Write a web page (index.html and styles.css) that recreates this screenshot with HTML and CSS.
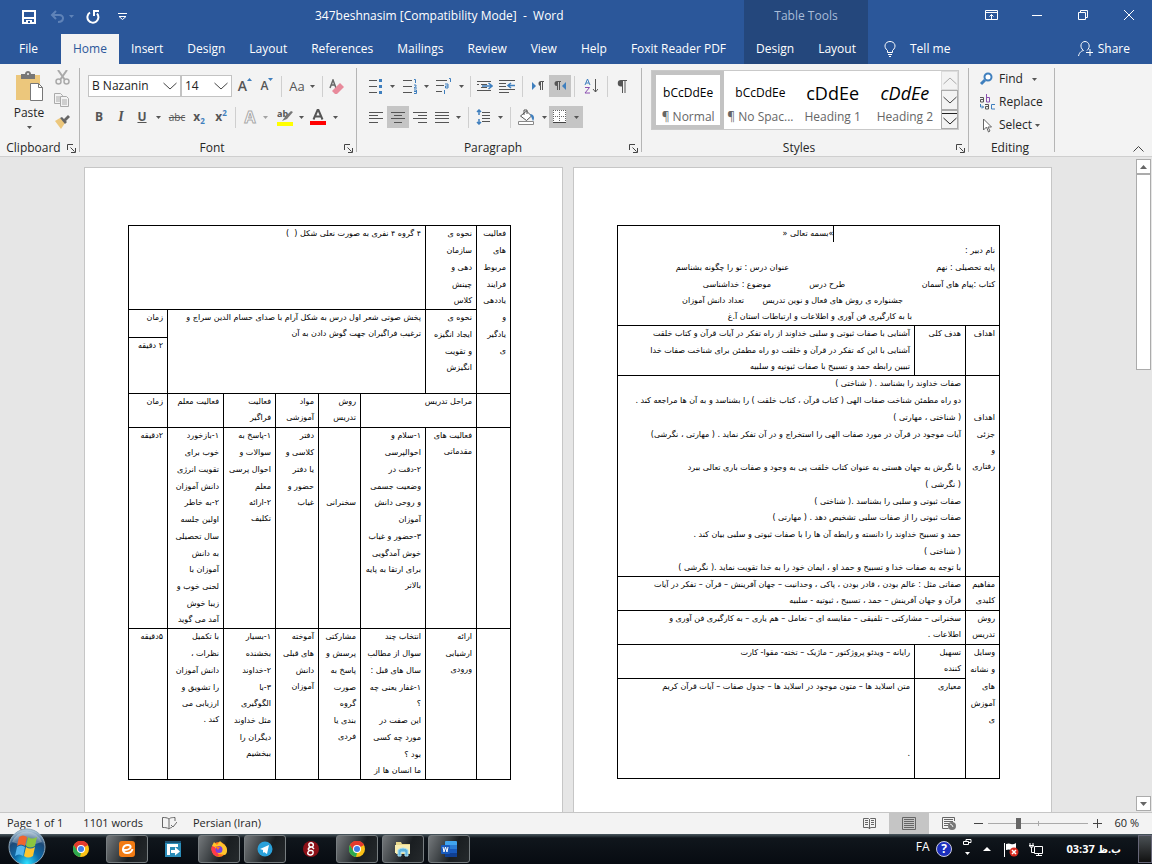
FILE: index.html
```html
<!DOCTYPE html>
<html lang="en">
<head>
<meta charset="utf-8">
<title>347beshnasim [Compatibility Mode] - Word</title>
<link rel="stylesheet" href="styles.css">
</head>
<body>
<svg class="defs" aria-hidden="true">
  <symbol id="caret" viewBox="0 0 5 3"><path d="M0 0h5L2.500 3z" fill="#555"/></symbol>
  <symbol id="launch" viewBox="0 0 9 9"><path d="M.5 6V.5H6M3.500 3.500l4 4M8.500 4v4.500H4" fill="none" stroke="#444"/></symbol>
  <symbol id="chrome" viewBox="0 0 16 16"><circle cx="8" cy="8" r="8" fill="#fbc116"/><path d="M8 8L1 4a8 8 0 0 1 14 0z" fill="#e33b2e"/><path d="M1 4l4 6.500L8 12l-1 4A8 8 0 0 1 1 4z" fill="#2da94f"/><path d="M8 4h7.200A8 8 0 0 0 1 4l3.500 6z" fill="#e33b2e"/><circle cx="8" cy="8" r="4" fill="#fff"/><circle cx="8" cy="8" r="3" fill="#3f7ee8"/></symbol>
  <symbol id="down" viewBox="0 0 14 8"><path d="M.5 1L7 7l6.500-6" fill="none" stroke="#444"/></symbol>
</svg>
<div class="app">
<header class="head">
  <div class="headmain">
    <div class="quick">
      <button aria-label="Save"><svg width="14" height="14"><path d="M1 1h12v12H1z" fill="none" stroke="#fff" stroke-width="2"/><path d="M2 7h10v2H2zM4 10h6v4H4z" fill="#fff"/><path d="M6 11h2v2H6z" fill="#2b579a"/></svg></button>
      <button class="undo" aria-label="Undo"><svg width="24" height="14"><path d="M6 1L2 5l4 4M2 5h7c6 0 5 7-1 7" fill="none" stroke="#5f83b8" stroke-width="2"/><path d="M19 5h5l-2.500 3z" fill="#5f83b8"/></svg></button>
      <button aria-label="Redo"><svg width="14" height="14"><path d="M4 2.500A5.500 5.500 0 1 0 11 3.500" fill="none" stroke="#fff" stroke-width="2"/><path d="M8 0v6M7 1h6" stroke="#fff" stroke-width="2"/></svg></button>
      <button aria-label="Customize Quick Access Toolbar"><svg width="9" height="8"><path d="M0 .5h9M1 3.500h7l-3.500 3z" fill="none" stroke="#fff"/></svg></button>
    </div>
    <h1 class="title">347beshnasim [Compatibility Mode] &nbsp;- &nbsp;Word</h1>
    <nav class="tabs">
      <button class="file">File</button><button class="on">Home</button><button>Insert</button><button>Design</button><button>Layout</button><button>References</button><button>Mailings</button><button>Review</button><button>View</button><button>Help</button><button>Foxit Reader PDF</button>
    </nav>
  </div>
  <div class="tools"><span class="toolstitle">Table Tools</span><nav class="tabs"><button>Design</button><button>Layout</button></nav></div>
  <div class="headend">
    <div class="win">
      <button aria-label="Ribbon display options"><svg width="13" height="10"><path d="M.5.500h12v9H.5zM0 2.500h13M6.500 9V4.500M4.500 6.500l2-2 2 2" fill="none" stroke="#fff"/></svg></button>
      <button aria-label="Minimize"><svg width="10" height="10"><path d="M0 5.500h10" stroke="#fff"/></svg></button>
      <button aria-label="Restore"><svg width="10" height="10"><path d="M.5 2.500h7v7h-7zM2.500 2V.5h7v7H8" fill="none" stroke="#fff"/></svg></button>
      <button aria-label="Close"><svg width="10" height="10"><path d="M0 0l10 10M10 0L0 10" stroke="#fff"/></svg></button>
    </div>
    <div class="help">
      <button><svg width="12" height="16"><path d="M3.500 11.500v-2C-1 6 1 .5 6 .5s7 5.500 2.500 9v2zM4 13.500h4M5 15.500h2" fill="none" stroke="#fff"/></svg>Tell me</button>
      <button class="share"><svg width="16" height="16"><path d="M.5 15c1-4 3-5 5-5.500C1 6 3 .5 7 .5s6 5.500 2 9M12 8v7M8 11.500h7" fill="none" stroke="#fff"/></svg>Share</button>
    </div>
  </div>
</header>

<section class="ribbon">
  <div class="group clip">
    <div class="body">
      <button class="paste"><svg width="29" height="32"><path d="M1 4h24v25H1z" fill="#ecc77c"/><path d="M6 3h4c0-4 6-4 6 0h4v5H6z" fill="#777"/><circle cx="13" cy="3" r="1" fill="#f3f3f3"/><path d="M15.500 12.500h8l4 4v13h-12z" fill="#fff" stroke="#777"/><path d="M23.500 12.500v4h4" fill="none" stroke="#777"/></svg>Paste<svg class="pcaret" width="5" height="3"><use href="#caret"/></svg></button>
      <div class="cliptools">
        <button aria-label="Cut"><svg width="15" height="15"><path d="M3 0l7 10M12 0L5 10" stroke="#aaa" stroke-width="2"/><circle cx="3.500" cy="11.500" r="2.500" fill="none" stroke="#aaa" stroke-width="1.500"/><circle cx="11.500" cy="11.500" r="2.500" fill="none" stroke="#aaa" stroke-width="1.500"/></svg></button>
        <button aria-label="Copy"><svg width="16" height="14"><path d="M.5.500h6l2 2v8h-8zM2 4h4M2 6h4M2 8h4" fill="none" stroke="#aaa"/><path d="M6.500 3.500h6l2 2v8h-8z" fill="#f3f3f3" stroke="#aaa"/><path d="M8 7h5M8 9h5M8 11h5" stroke="#aaa"/></svg></button>
        <button aria-label="Format Painter"><svg width="16" height="14"><path d="M1 6l5-3 5 5-4 6z" fill="#ecc77c"/><path d="M6 3l2-1 5 5-2 2zM10 4l4-4 2 2-4 4z" fill="#666"/></svg></button>
      </div>
    </div>
    <div class="label"><span>Clipboard</span><svg width="9" height="9"><use href="#launch"/></svg></div>
  </div>

  <div class="group font">
    <div class="body rows">
      <div class="row">
        <button class="combo w93">B Nazanin<svg width="14" height="8"><use href="#down"/></svg></button><button class="combo w51">14<svg width="14" height="8"><use href="#down"/></svg></button>
        <button class="w22 glyph big" aria-label="Grow font">A<svg width="5" height="12"><path d="M0 3h5L2.500 0z" fill="#3f7fbe"/></svg></button>
        <button class="w22 glyph" aria-label="Shrink font">A<svg width="5" height="12"><path d="M0 0h5L2.500 3z" fill="#3f7fbe"/></svg></button>
        <i class="sep"></i><button class="w34 case">Aa<svg width="5" height="3"><use href="#caret"/></svg></button><i class="sep"></i>
        <button class="w22" aria-label="Clear formatting"><svg width="16" height="15"><path d="M1 9l3-8 3 8M2 6h4" fill="none" stroke="#666" stroke-width="1.500"/><path d="M4 11l7-7 4 4-7 7H6l-3-3z" fill="#e88a9b"/></svg></button>
      </div>
      <div class="row">
        <button class="w22 bold">B</button><button class="w22 ital">I</button><button class="w34 bold"><u>U</u><svg width="5" height="3"><use href="#caret"/></svg></button><button class="w22 strike">abc</button><button class="w22 bold">x<sub>2</sub></button><button class="w22 bold">x<sup>2</sup></button><i class="sep"></i>
        <button class="w34 outline">A<svg width="5" height="3" opacity=".5"><use href="#caret"/></svg></button>
        <button class="w34 mark" aria-label="Text highlight color"><svg width="17" height="20"><text x="0" y="10" font-size="9" font-weight="700" fill="#555">ab</text><path d="M5 14l3-4 6-6 2 1-6 7z" fill="#777"/><path d="M0 15h16v4H0z" fill="#ff0"/></svg><svg width="5" height="3"><use href="#caret"/></svg></button>
        <button class="w34" aria-label="Font color"><svg width="16" height="16"><path d="M3.500 10.500L8 0l4.500 10.500M5 7.500h6" fill="none" stroke="#555" stroke-width="2"/><path d="M0 12h16v4H0z" fill="red"/></svg><svg width="5" height="3"><use href="#caret"/></svg></button>
      </div>
    </div>
    <div class="label"><span>Font</span><svg width="9" height="9"><use href="#launch"/></svg></div>
  </div>

  <div class="group para">
    <div class="body rows">
      <div class="row">
        <button class="w34" aria-label="Bullets"><svg width="14" height="15"><path d="M0 1.500h8M0 7.500h8M0 13.500h8" stroke="#555"/><path d="M10 0h3v3h-3zM10 6h3v3h-3zM10 12h3v3h-3z" fill="#3f7fbe"/></svg><svg width="5" height="3"><use href="#caret"/></svg></button>
        <button class="w34" aria-label="Numbering"><svg width="14" height="15"><path d="M0 1.500h9M0 7.500h9M0 13.500h9" stroke="#555"/><path d="M11 .5h1.500V4M11 6h2v1.500L11 9h3M11 11h2.500v3.500H11M11 12.500h2" fill="none" stroke="#3f7fbe"/></svg><svg width="5" height="3"><use href="#caret"/></svg></button>
        <button class="w34" aria-label="Multilevel list"><svg width="16" height="16"><path d="M0 2.500h11M0 7.500h8M0 13.500h6" stroke="#555"/><path d="M13 .5h1.500V4M9 6h3v4H9.500V8H12M8.500 12v4" fill="none" stroke="#3f7fbe"/></svg><svg width="5" height="3"><use href="#caret"/></svg></button><i class="sep"></i>
        <button class="w22" aria-label="Decrease indent"><svg width="16" height="12"><path d="M0 1.500h14M4 4.500h6M0 4.500h2M4 7.500h6M0 10.500h14" stroke="#555"/><path d="M5 6h10M11.500 3L15 6l-3.500 3" fill="none" stroke="#3f7fbe" stroke-width="1.500"/></svg></button>
        <button class="w22" aria-label="Increase indent"><svg width="16" height="13"><path d="M0 .5h16M0 3.500h7M0 6.500h7M0 9.500h16M0 12.500h10" stroke="#555"/><path d="M16 5.500H9M12 3L9 5.500 12 8" fill="none" stroke="#3f7fbe" stroke-width="1.500"/></svg></button><i class="sep wide"></i>
        <button class="w22" aria-label="Left-to-right"><svg width="12" height="10"><path d="M0 1l4 4-4 4z" fill="#3f7fbe"/><path d="M9 5a2.500 2.500 0 0 1 0-5h3v1h-1v8h-1V1H9v8H8V5z" fill="#555"/></svg></button>
        <button class="w22 sel" aria-label="Right-to-left"><svg width="12" height="10"><path d="M12 1L8 5l4 4z" fill="#3f7fbe"/><path d="M3 5a2.500 2.500 0 0 1 0-5h4v1H6v8H5V1H4v8H3z" fill="#555"/></svg></button><i class="sep"></i>
        <button class="w26" aria-label="Sort"><svg width="14" height="16"><path d="M1 7l2.500-6L6 7M2 5h3" fill="none" stroke="#3f7fbe"/><path d="M1 9.500h4.500L1 15h5" fill="none" stroke="#8a4fb0"/><path d="M11.500 1v13M9 11l2.500 3 2.500-3" fill="none" stroke="#555"/></svg></button><i class="sep"></i>
        <button class="w22" aria-label="Show formatting marks"><svg width="10" height="13"><path d="M4 6.500a3 3 0 0 1 0-6.500h6v1H8.500v12h-1V1H6v12H5V6.500z" fill="#555"/></svg></button>
      </div>
      <div class="row">
        <button class="w22" aria-label="Align left"><svg width="14" height="11"><path d="M0 .5h14M0 3.500h9M0 6.500h14M0 10.500h9" stroke="#555"/></svg></button>
        <button class="w22 sel" aria-label="Center"><svg width="14" height="11"><path d="M0 .5h14M3 3.500h8M0 6.500h14M3 10.500h8" stroke="#555"/></svg></button>
        <button class="w22" aria-label="Align right"><svg width="14" height="11"><path d="M0 .5h14M5 3.500h9M0 6.500h14M5 10.500h9" stroke="#555"/></svg></button>
        <button class="w34" aria-label="Justify"><svg width="14" height="11"><path d="M0 .5h14M0 3.500h14M0 6.500h14M0 10.500h14" stroke="#555"/></svg><svg width="5" height="3"><use href="#caret"/></svg></button><i class="sep"></i>
        <button class="w34" aria-label="Line spacing"><svg width="15" height="16"><path d="M6 3.500h8M6 6.500h8M6 9.500h8M6 12.500h8" stroke="#555"/><path d="M3 1v5M1 3l2-2 2 2M3 10v5M1 13l2 2 2-2" fill="none" stroke="#3f7fbe" stroke-width="1.500"/></svg><svg width="5" height="3"><use href="#caret"/></svg></button><i class="sep wide"></i>
        <button class="w34" aria-label="Shading"><svg width="17" height="16"><path d="M2.500 7l6-5 5 5-5 4.500zM6 6V1h3v4" fill="#fff" stroke="#555"/><path d="M12 5c4 0 5 4 3 7z" fill="#3f7fbe"/><path d="M.5 12.500h15v3H.5z" fill="#fff" stroke="#888"/></svg><svg width="5" height="3"><use href="#caret"/></svg></button>
        <button class="w34 sel" aria-label="Borders"><svg width="14" height="14"><path d="M0 0h13v13H0z" fill="#fff"/><path d="M.5 0v12M6.500 0v12M12.500 0v12M0 .5h13M0 6.500h13" stroke="#666" stroke-dasharray="1 1"/><path d="M0 12.500h13" stroke="#444"/></svg><svg width="5" height="3"><use href="#caret"/></svg></button>
      </div>
    </div>
    <div class="label"><span>Paragraph</span><svg width="9" height="9"><use href="#launch"/></svg></div>
  </div>

  <div class="group styles">
    <div class="body"><div class="gallery">
      <button class="style cur"><span class="demo">bCcDdEe</span><span>¶ Normal</span></button>
      <button class="style"><span class="demo">bCcDdEe</span><span>¶ No Spac...</span></button>
      <button class="style"><span class="demo h1">cDdEe</span><span>Heading 1</span></button>
      <button class="style"><span class="demo h2">cDdEe</span><span>Heading 2</span></button>
      <div class="scrolls"><button class="dim" aria-label="Previous styles"><svg width="14" height="8"><path d="M.5 7L7 1l6.500 6" fill="none" stroke="#aaa"/></svg></button><button aria-label="Next styles"><svg width="14" height="8"><use href="#down"/></svg></button><button aria-label="More styles"><svg width="16" height="12"><path d="M0 .5h16M1.500 5L8 11l6.500-6" fill="none" stroke="#222"/></svg></button></div>
    </div></div>
    <div class="label"><span>Styles</span><svg width="9" height="9"><use href="#launch"/></svg></div>
  </div>

  <div class="group edit">
    <div class="body edits">
      <button><svg class="ico" width="16" height="14"><circle cx="9" cy="5" r="3.500" fill="#fff" stroke="#3f7fbe" stroke-width="2"/><path d="M6 8l-4 4" stroke="#3f7fbe" stroke-width="3"/></svg>Find<svg class="far" width="5" height="3"><use href="#caret"/></svg></button>
      <button><svg class="ico" width="17" height="20" fill="none" stroke="#555"><path d="M1 5.500h3.500V10H1.500V7.500h3"/><path d="M7.500 2v8h3V5.500h-3" stroke="#8a4fb0"/><path d="M6 12.500h3.500V17H6.500v-2.500h3"/><path d="M16 12.500h-3.500V17H16M1.500 12v3h3M3 13.500l1.500 1.500L3 16.500" stroke="#3f7fbe"/></svg>Replace</button>
      <button><svg class="ico" width="16" height="15"><path d="M4.500 1v11l3-3 2 5 1.500-1-2-4h3.500z" fill="#fff" stroke="#666"/></svg>Select<svg width="5" height="3"><use href="#caret"/></svg></button>
    </div>
    <div class="label"><span>Editing</span></div>
  </div>
  <button class="collapse" aria-label="Collapse ribbon"><svg width="11" height="6"><path d="M.5 5.500l5-5 5 5" fill="none" stroke="#444"/></svg></button>
</section>

<main class="work">
  <div class="canvas">
    <article class="page" dir="rtl" lang="fa">
      <table class="t1">
        <colgroup><col class="k1"><col class="k2"><col></colgroup>
        <tr class="r100"><td colspan="3">
          <p class="mid">»بسمه تعالی «</p><p>نام دبیر :</p>
          <p><span class="s206">پایه تحصیلی : نهم</span>عنوان درس : تو را چگونه بشناسم</p>
          <p><span class="s150">کتاب :پیام های آسمان</span><span class="s74">طرح درس</span>موضوع : خداشناسی</p>
          <p><span class="s92"></span><span class="s159">جشنواره ی روش های فعال و نوین تدریس</span>تعداد دانش آموزان</p>
          <p><span class="s83"></span>با به کارگیری فن آوری و اطلاعات و ارتباطات استان آ.غ</p></td></tr>
        <tr class="r50"><td><p>اهداف</p></td><td><p>هدف کلی</p></td><td><p>آشنایی با صفات ثبوتی و سلبی خداوند از راه تفکر در آیات قرآن و کتاب خلقت</p><p>آشنایی با این که تفکر در قرآن و خلقت دو راه مطمئن برای شناخت صفات خدا</p><p>تبیین رابطه حمد و تسبیح با صفات ثبوتیه و سلبیه</p></td></tr>
        <tr class="r201"><td><p></p><p></p><p>اهداف</p><p>جزئی</p><p>و</p><p>رفتاری</p></td><td colspan="2"><p>صفات خداوند را بشناسد . ( شناختی )</p><p>دو راه مطمئن شناخت صفات الهی ( کتاب قرآن ، کتاب خلقت ) را بشناسد و به آن ها مراجعه کند .</p><p>( شناختی ، مهارتی )</p><p>آیات موجود در قرآن در مورد صفات الهی را استخراج و در آن تفکر نماید . ( مهارتی ، نگرشی)</p><p></p><p>با نگرش به جهان هستی به عنوان کتاب خلقت پی به وجود و صفات باری تعالی ببرد</p><p>( نگرشی )</p><p>صفات ثبوتی و سلبی را بشناسد .( شناختی )</p><p>صفات ثبوتی را از صفات سلبی تشخیص دهد . ( مهارتی )</p><p>حمد و تسبیح خداوند را دانسته و رابطه آن ها را با صفات ثبوتی و سلبی بیان کند .</p><p>( شناختی )</p><p>با توجه به صفات خدا و تسبیح و حمد او ، ایمان خود را به خدا تقویت نماید .( نگرشی )</p></td></tr>
        <tr class="r34"><td><p>مفاهیم</p><p>کلیدی</p></td><td colspan="2"><p>صفاتی مثل : عالم بودن ، قادر بودن ، پاکی ، وحدانیت – جهان آفرینش – قرآن – تفکر در آیات</p><p>قرآن و جهان آفرینش – حمد ، تسبیح ، ثبوتیه - سلبیه</p></td></tr>
        <tr class="r34"><td><p>روش</p><p>تدریس</p></td><td colspan="2"><p>سخنرانی – مشارکتی – تلفیقی – مقایسه ای – تعامل – هم یاری – به کارگیری فن آوری و</p><p>اطلاعات .</p></td></tr>
        <tr class="r34"><td rowspan="2"><p>وسایل</p><p>و نشانه</p><p>های</p><p>آموزش</p><p>ی</p></td><td><p>تسهیل</p><p>کننده</p></td><td><p>رایانه – ویدئو پروژکتور – ماژیک – تخته- مقوا- کارت</p></td></tr>
        <tr class="r100"><td><p>معیاری</p></td><td><p>متن اسلاید ها – متون موجود در اسلاید ها – جدول صفات – آیات قرآن کریم</p><p></p><p></p><p></p><p>.</p></td></tr>
      </table>
    </article>
    <article class="page" dir="rtl" lang="fa">
      <table class="t2">
        <colgroup><col class="k1"><col class="k2"><col class="k3"><col class="k4"><col class="k5"><col class="k6"><col class="k7"><col></colgroup>
        <tr class="r83"><td rowspan="3"><p>فعالیت</p><p>های</p><p>مربوط</p><p>فرایند</p><p>یاددهی</p><p>و</p><p>یادگیر</p><p>ی</p></td><td><p>نحوه ی</p><p>سازمان</p><p>دهی و</p><p>چینش</p><p>کلاس</p></td><td colspan="6"><p>۴ گروه ۴ نفری به صورت نعلی شکل ( &nbsp;)</p></td></tr>
        <tr class="r28"><td rowspan="2"><p>نحوه ی</p><p>ایجاد انگیزه</p><p>و تقویت</p><p>انگیزش</p></td><td colspan="5" rowspan="2"><p>پخش صوتی شعر اول درس به شکل آرام با صدای حسام الدین سراج و</p><p>ترغیب فراگیران جهت گوش دادن به آن</p></td><td><p>زمان</p></td></tr>
        <tr class="r56"><td><p>۲ دقیقه</p></td></tr>
        <tr class="r34"><td></td><td colspan="2"><p>مراحل تدریس</p></td><td><p>روش</p><p>تدریس</p></td><td><p>مواد</p><p>آموزشی</p></td><td><p>فعالیت</p><p>فراگیر</p></td><td><p>فعالیت معلم</p></td><td><p>زمان</p></td></tr>
        <tr class="r201"><td></td><td><p>فعالیت های</p><p>مقدماتی</p></td><td><p>۱-سلام و</p><p>احوالپرسی</p><p>۲-دقت در</p><p>وضعیت جسمی</p><p>و روحی دانش</p><p>آموزان</p><p>۳-حضور و غیاب</p><p>خوش آمدگویی</p><p>برای ارتقا به پایه</p><p>بالاتر</p></td><td><p></p><p></p><p></p><p></p><p>سخنرانی</p></td><td><p>دفتر</p><p>کلاسی و</p><p>یا دفتر</p><p>حضور و</p><p>غیاب</p></td><td><p>۱-پاسخ به</p><p>سوالات و</p><p>احوال پرسی</p><p>معلم</p><p>۲-ارائه</p><p>تکلیف</p></td><td><p>۱-بازخورد</p><p>خوب برای</p><p>تقویت انرژی</p><p>دانش آموزان</p><p>۲-به خاطر</p><p>اولین جلسه</p><p>سال تحصیلی</p><p>به دانش</p><p>آموزان با</p><p>لحنی خوب و</p><p>زیبا خوش</p><p>آمد می گوید</p></td><td><p>۲دقیقه</p></td></tr>
        <tr class="r150"><td></td><td><p>ارائه</p><p>ارشیابی</p><p>ورودی</p></td><td><p>انتخاب چند</p><p>سوال از مطالب</p><p>سال های قبل :</p><p>۱-غفار یعنی چه</p><p>؟</p><p>این صفت در</p><p>مورد چه کسی</p><p>بود ؟</p><p>ما انسان ها از</p></td><td><p>مشارکتی</p><p>پرسش و</p><p>پاسخ به</p><p>صورت</p><p>گروه</p><p>بندی یا</p><p>فردی</p></td><td><p>آموخته</p><p>های قبلی</p><p>دانش</p><p>آموزان</p></td><td><p>۱-بسیار</p><p>بخشنده</p><p>۲-خداوند</p><p>۳-با</p><p>الگوگیری</p><p>مثل خداوند</p><p>دیگران را</p><p>ببخشیم</p></td><td><p>با تکمیل</p><p>نظرات ،</p><p>دانش آموزان</p><p>را تشویق و</p><p>ارزیابی می</p><p>کند .</p></td><td><p>۵دقیقه</p></td></tr>
      </table>
    </article>
  </div>
  <div class="vscroll"><button aria-label="Scroll up"><svg width="7" height="4"><path d="M0 4h7L3.500 0z" fill="#666"/></svg></button><div class="thumb"></div><button aria-label="Scroll down"><svg width="7" height="4"><path d="M0 0h7L3.500 4z" fill="#666"/></svg></button></div>
</main>

<footer class="status">
  <span>Page 1 of 1</span><span class="words">1101 words</span>
  <svg width="15" height="13"><path d="M7 2C5 .5 3 .5.500.500v10C3 10.500 5 10.500 7 12V2c1-1 2-1.500 6-1.500V4M7 12c1-1 2-1.500 3-1.500M9 8l2 2 4-5" fill="none" stroke="#666"/></svg>
  <span class="lang">Persian (Iran)</span>
  <div class="views">
    <button aria-label="Read mode"><svg width="13" height="13"><path d="M.5 1.500h5l1 1 1-1h5v9h-5l-1 1.500-1-1.500h-5zM6.500 2v10M2 3.500h3M2 5.500h3M2 7.500h3M8 3.500h3M8 5.500h3M8 7.500h3" fill="none" stroke="#666"/></svg></button>
    <button class="sel" aria-label="Print layout"><svg width="14" height="13"><path d="M.5.500h13v12H.5zM2 2.500h10M2 4.500h10M2 6.500h10M2 8.500h10M2 10.500h10" fill="none" stroke="#666"/></svg></button>
    <button aria-label="Web layout"><svg width="14" height="13"><path d="M12.500 4V.5H.5v11h6M2 2.500h9M2 4.500h9M2 6.500h5M2 8.500h4" fill="none" stroke="#666"/><circle cx="10" cy="9" r="4" fill="#777"/><path d="M8 7l2 1 1 2" fill="none" stroke="#eee"/></svg></button>
  </div>
  <button class="zb" aria-label="Zoom out"><svg width="9" height="9"><path d="M0 4.500h9" stroke="#444"/></svg></button>
  <input class="zoom" type="range" min="10" max="190" value="63" aria-label="Zoom">
  <button class="zb" aria-label="Zoom in"><svg width="9" height="9"><path d="M0 4.500h9M4.500 0v9" stroke="#444"/></svg></button>
  <span class="pct">60 %</span>
</footer>

<footer class="taskbar">
  <button class="orb" aria-label="Start"><svg width="38" height="36" viewBox="0 0 38 36"><defs><radialGradient id="og" cx=".5" cy=".95" r=".9"><stop offset="0" stop-color="#2ee0ff"/><stop offset=".4" stop-color="#0d6cab"/><stop offset=".75" stop-color="#1d4a78"/><stop offset="1" stop-color="#a9c3d6"/></radialGradient></defs><circle cx="19" cy="19" r="18" fill="url(#og)" stroke="#8fa9bc"/><path d="M4 14a16 16 0 0 1 30 0q-15 6-30 0z" fill="#fff" opacity=".3"/><path d="M11 9q4-3 8 0l-2 9q-4-3-8 0z" fill="#f0652e"/><path d="M20 9q4 3 9 0l-2 9q-5 3-9 0z" fill="#8cc63f"/><path d="M9 19q4-3 8 0l-2 9q-4-3-8 0z" fill="#55b5ee"/><path d="M18 19q4 3 9 0l-2 9q-5 3-9 0z" fill="#fdc52e"/></svg></button>
  <button class="task" aria-label="Chrome"><svg width="16" height="16"><use href="#chrome"/></svg></button>
  <button class="task open" aria-label="Eitaa"><svg width="16" height="16"><rect width="16" height="16" rx="3" fill="#f27b13"/><path d="M5 9c8 0 8-5 4-5-6 0-7 8-1 8 3 0 5-2 5.500-4" fill="none" stroke="#fff" stroke-width="2"/></svg></button>
  <button class="task" aria-label="File transfer"><svg width="16" height="16"><path d="M0 0h16v16H0z" fill="#2a8cb8"/><path d="M2 3h11v3H5v8H2zM6 9h4V6l5 4.500-5 4V12H6z" fill="#fff"/><path d="M0 0h16v2H0z" fill="#1b5375"/></svg></button>
  <button class="task open" aria-label="Firefox"><svg width="16" height="16"><circle cx="8" cy="8.500" r="7.500" fill="#ff7a1a"/><path d="M1 5l2-4 3 3 3-4 3 3c5 2 5 9 2 11L4 12z" fill="#ffc52d"/><path d="M1 5l3 1 4 9c-6 1-9-6-7-10z" fill="#ff3a4c"/><circle cx="8" cy="8.500" r="3.500" fill="#7a3fe0"/><path d="M4 5l5 1-2 3z" fill="#ff7a1a"/></svg></button>
  <button class="task open" aria-label="Telegram"><svg width="16" height="16"><circle cx="8" cy="8" r="7.500" fill="#2aa1da"/><path d="M3 8l9-4-2 9-3-2-1 1V9z" fill="#fff"/></svg></button>
  <button class="task" aria-label="Dictionary"><svg width="16" height="16"><circle cx="8" cy="8" r="8" fill="#8c1017"/><path d="M9 2c-4-1-4 4-1 4s3-3 1-4M8 6c-4 1-3 4 0 3.500s3 5-1 4.500-2-5 1-4.500M9 6l2 2" fill="none" stroke="#fff" stroke-width="1.500"/></svg></button>
  <button class="task open" aria-label="Chrome window"><svg width="16" height="16"><use href="#chrome"/></svg></button>
  <button class="task open" aria-label="Explorer"><svg width="16" height="16"><path d="M1 1h5l1 2h8v10H1z" fill="#ead98c"/><path d="M0 4h15v8H0z" fill="#f8edb2"/><path d="M3 15V9q5-4 10 0v6h-3v-4H6v4z" fill="#5eb3dd" stroke="#ade0f3"/></svg></button>
  <button class="task open" aria-label="Word"><svg width="16" height="16"><rect x="4" width="12" height="16" rx="1" fill="#41a5ee"/><path d="M4 4h12v4H4z" fill="#2b7cd3"/><path d="M4 8h12v4H4z" fill="#185abd"/><path d="M4 12h12v4H4z" fill="#103f91"/><rect y="4" width="9" height="9" rx="1" fill="#185abd"/><path d="M2 6l1 5 1.500-5L6 11l1-5" fill="none" stroke="#fff"/></svg></button>
  <div class="tray"><span class="fa">FA</span>
    <svg width="16" height="16"><circle cx="8" cy="8" r="7.500" fill="#1c2fbd" stroke="#ccd"/><text x="8" y="12" text-anchor="middle" font-size="12" font-weight="700" fill="#fff">?</text></svg>
    <svg class="lift" width="9" height="17"><path d="M.5 2.500h5v3h-5zM3 2V.5h5v3H6" fill="none" stroke="#fff"/><path d="M2 13h5l-2.500 3z" fill="#fff"/></svg>
    <svg width="8" height="4"><path d="M0 4h8L4 0z" fill="#fff"/></svg>
    <svg class="flag" width="15" height="15"><path d="M.5 1v14" stroke="#fff"/><path d="M2 2q3-1 5 0t5-1v6q-3 2-5 1t-5 0z" fill="#fff"/><circle cx="10" cy="10" r="4.500" fill="#d92c20"/><path d="M8 8l4 4M12 8l-4 4" stroke="#fff" stroke-width="1.500"/></svg>
    <svg width="15" height="15"><path d="M5.500 4.500h8v7h-8zM7 13.500h6M9.500 12v2M0 3.500h5M1 1v4h3V1M2.500 5v5.500H5" fill="none" stroke="#fff"/></svg>
    <time><bdi>03:37</bdi> <bdi>ب.ظ</bdi></time>
  </div>
  <button class="peek" aria-label="Show desktop"></button>
</footer>
</div>
</body>
</html>
```
FILE: styles.css
```css
* { box-sizing: border-box; }
body { margin: 0; background: #e6e6e6; color: #262626; font: 12px/16px "Open Sans", "Noto Sans", sans-serif; }
button { display: flex; align-items: center; justify-content: center; margin: 0; padding: 0; border: 0; background: none; color: inherit; font: inherit; white-space: nowrap; }
svg { flex: none; display: block; }
.defs { position: absolute; width: 0; height: 0; }
.app { display: flex; flex-direction: column; height: 100vh; }
p { margin: 0; }

/* title bar and tabs */
.head { display: flex; flex: none; height: 64px; background: #2b579a; color: #fff; }
.headmain { flex: 0 0 744px; display: grid; grid-template-columns: 300px 1fr; grid-template-rows: 34px 30px; }
.quick { display: flex; align-items: center; gap: 12px; padding-left: 22px; }
.quick .undo { margin-left: 2px; }
.quick button:last-child { margin-left: 6px; }
.title { margin: 0; padding: 8px 15px; font: 12px/16px "Open Sans", sans-serif; }
.tabs { display: flex; height: 30px; }
.headmain .tabs { grid-column: 1 / 3; }
.tabs button { flex: none; padding: 0 12px; }
.headmain .file { width: 61px; padding-right: 16px; }
.tabs .on { background: #f3f3f3; color: #2b579a; }
.tools { width: 124px; flex: none; display: flex; flex-direction: column; justify-content: space-between; background: #24477c; }
.tools .tabs { justify-content: center; }
.toolstitle { padding: 8px; text-align: center; color: #a9bcd8; }
.headend { flex: 1; display: flex; flex-direction: column; justify-content: space-between; }
.win { display: flex; justify-content: flex-end; height: 30px; }
.win button { width: 46px; }
.help { display: flex; justify-content: space-between; height: 30px; padding: 0 22px 0 16px; }
.help button { gap: 14px; }
.help .share { gap: 4px; }

/* ribbon */
.ribbon { flex: none; display: flex; height: 93px; padding-top: 4px; background: #f3f3f3; border-bottom: 1px solid #cfcfcf; }
.group { flex: none; display: flex; flex-direction: column; justify-content: space-between; background: linear-gradient(#b5b5b5, #b5b5b5) right top / 1px 84px no-repeat; }
.clip { width: 80px; }
.font { width: 277px; }
.para { width: 285px; }
.styles { width: 327px; }
.edit { width: 86px; }
.body { display: flex; }
.label { display: flex; align-items: center; height: 16px; padding-right: 4px; }
.label span { flex: 1; text-align: center; }
.paste { flex-direction: column; justify-content: flex-start; gap: 2px; width: 54px; padding-top: 3px; padding-left: 4px; }
.pcaret { margin-top: 3px; }
.cliptools { display: flex; flex-direction: column; gap: 8px; padding-top: 2px; }
.rows { flex-direction: column; gap: 9px; padding: 7px 0 0 8px; }
.row { display: flex; align-items: center; height: 22px; }
.row button { flex: none; height: 22px; gap: 7px; color: #555; }
.w22 { width: 22px; } .w26 { width: 26px; } .w34 { width: 34px; } .w51 { width: 51px; } .w93 { width: 93px; }
.row .combo { justify-content: space-between; padding: 0 3px; background: #fff; border: 1px solid #c3c3c3; color: #222; }
.row .combo + .combo { margin-right: 2px; }
.row .glyph { gap: 0; font-weight: 600; }
.row .big { font-size: 14px; }
.glyph svg { align-self: flex-start; margin-top: 3px; }
.row .case { font-size: 13px; gap: 5px; }
.row .mark { gap: 5px; }
.row .bold { font-weight: 700; gap: 9px; }
.row .bold:has(sub), .row .bold:has(sup) { gap: 0; }
.row .ital { font: italic 700 14px "Liberation Serif", serif; }
.row .strike { font-size: 10px; text-decoration: line-through; }
sub, sup { color: #3f7fbe; font-size: 8px; line-height: 8px; vertical-align: baseline; }
sub { align-self: flex-end; margin-bottom: 3px; } sup { align-self: flex-start; margin-top: 3px; }
.row .outline { color: #fff; font-weight: 700; font-size: 16px; -webkit-text-stroke: 1px #aaa; }
.sep { flex: none; width: 1px; height: 21px; margin: 0 3px; background: #cfcfcf; }
.sep.wide { margin: 0 4px; }
.sel { background: #c5c5c5; }
.styles .body { padding: 2px 10px 0 9px; }
.gallery { flex: 1; display: flex; height: 60px; background: #fff; border: 1px solid #c9c9c9; }
.style { flex: 1; min-width: 0; flex-direction: column; gap: 6px; padding-top: 8px; border: 4px solid transparent; color: #666; }
.style.cur { border-color: #c3c3c3; }
.demo { height: 20px; color: #000; line-height: 20px; }
.demo.h1 { font-size: 18px; } .demo.h2 { font-size: 18px; font-style: italic; }
.scrolls { width: 17px; display: grid; grid-template-rows: 1fr 1fr 1fr; }
.scrolls button { border: 1px solid #aaa; background: #f3f3f3; overflow: hidden; }
.scrolls .dim { border-color: #ddd; }
.edits { flex-direction: column; gap: 3px; align-items: flex-start; padding: 1px 0 0 10px; }
.edits button { height: 20px; gap: 3px; }
.edits .ico { width: 17px; }
.edits .far { margin-left: 6px; }
.collapse { margin: auto 8px 0 auto; padding-bottom: 4px; }

/* document area */
.work { flex: 1; min-height: 0; display: flex; }
.canvas { flex: 1; display: flex; flex-direction: row-reverse; justify-content: center; gap: 10px; padding-top: 10px; overflow: hidden; }
.page { flex: 0 1 479px; padding: 57px 51px 0 43px; background: #fff; border: 1px solid #c6c6c6; border-bottom: 0; color: #000; font: 8px/17px "DejaVu Sans", sans-serif; }
table { width: 100%; table-layout: fixed; border-collapse: collapse; }
td { padding: 0 4px; vertical-align: top; border: 1px solid #000; text-align: right; }
td p { height: 17px; white-space: nowrap; }
td p:nth-child(4n+1), td p:last-child { height: 16px; line-height: 16px; }
td span { display: inline-block; }
.mid { text-align: center; }
.mid::before { content: ""; display: inline-block; height: 16px; border-left: 1px solid #000; vertical-align: top; }
.s206 { width: 206px; } .s150 { width: 150px; } .s74 { width: 74px; } .s92 { width: 92px; } .s159 { width: 159px; } .s83 { width: 83px; }
.k1 { width: 34px; } .k2 { width: 51px; } .k3 { width: 65px; } .k4 { width: 42px; } .k5 { width: 43px; } .k6 { width: 52px; } .k7 { width: 56px; }
.r28 { height: 28px; } .r34 { height: 34px; } .r50 { height: 50px; } .r56 { height: 56px; } .r83 { height: 83px; } .r100 { height: 100px; } .r150 { height: 150px; } .r201 { height: 201px; }
.vscroll { width: 16px; display: flex; flex-direction: column; padding: 2px 1px 1px 0; }
.vscroll button { width: 15px; height: 15px; background: #fff; border: 1px solid #ababab; }
.vscroll .thumb { height: 196px; margin-bottom: auto; background: #fff; border: 1px solid #ababab; }

/* status bar */
.status { flex: none; display: flex; align-items: center; height: 22px; padding: 0 13px 0 7px; background: #f3f3f3; border-top: 1px solid #c6c6c6; font-size: 11px; }
.status span { line-height: 14px; padding-bottom: 2px; }
.words { margin: 0 19px 0 20px; }
.lang { margin-left: 16px; }
.views { display: flex; align-self: stretch; margin-left: auto; }
.views button { width: 40px; }
.zb { width: 19px; height: 20px; }
.zoom { appearance: none; width: 100px; height: 20px; margin: 0; background: linear-gradient(#aaa, #aaa) center / 100% 1px no-repeat, linear-gradient(#aaa, #aaa) center / 1px 5px no-repeat; }
.zoom::-webkit-slider-thumb { appearance: none; width: 5px; height: 11px; background: #666; }
.pct { width: 32px; text-align: right; }

/* taskbar */
.taskbar { flex: none; display: flex; align-items: center; height: 30px; background: linear-gradient(#4b5960, #10161c 4px, #070b11); color: #fff; }
.orb { width: 54px; height: 30px; margin-right: 6px; align-items: flex-end; }
.task { width: 42px; height: 28px; margin-right: 4px; border: 1px solid transparent; border-radius: 3px; }
.task.open { border-color: #777d80; background: linear-gradient(115deg, #74787b, #3c4144 40%, #1a1e21 60%, #25292c); }
.tray { display: flex; align-items: center; gap: 11px; margin-left: auto; }
.tray .fa { margin: 0 -4px 4px 0; }
.tray .lift { align-self: flex-start; }
.tray .flag { margin: 0 -1px 0 2px; }
.tray time { margin: 0 17px 0 11px; font: 700 11px/16px "Open Sans", "DejaVu Sans Condensed", sans-serif; }
.peek { width: 14px; height: 28px; border: 1px solid #667; background: linear-gradient(#4a5054, #111); }
```
